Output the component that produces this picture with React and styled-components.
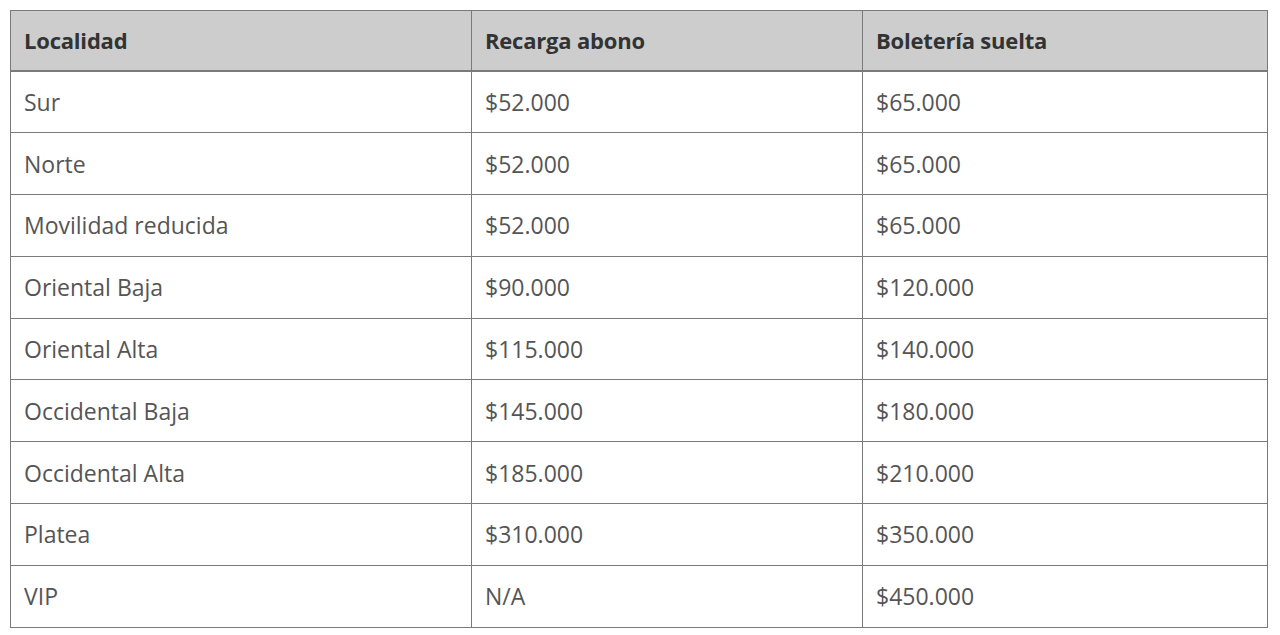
import React from 'react';
import styled, { createGlobalStyle } from 'styled-components';

const rows = [
  ['Sur', '$52.000', '$65.000'],
  ['Norte', '$52.000', '$65.000'],
  ['Movilidad reducida', '$52.000', '$65.000'],
  ['Oriental Baja', '$90.000', '$120.000'],
  ['Oriental Alta', '$115.000', '$140.000'],
  ['Occidental Baja', '$145.000', '$180.000'],
  ['Occidental Alta', '$185.000', '$210.000'],
  ['Platea', '$310.000', '$350.000'],
  ['VIP', 'N/A', '$450.000'],
];

export default function App() {
  return (
    <>
      <GlobalStyle />
      <Wrapper>
        <Table>
          <colgroup>
            <col style={{ width: 461 }} />
            <col style={{ width: 391 }} />
            <col />
          </colgroup>
          <thead>
            <tr>
              <Th>Localidad</Th>
              <Th>Recarga abono</Th>
              <Th>Boletería suelta</Th>
            </tr>
          </thead>
          <tbody>
            {rows.map((r) => (
              <tr key={r[0]}>
                {r.map((c, i) => (
                  <Td key={i}>{c}</Td>
                ))}
              </tr>
            ))}
          </tbody>
        </Table>
      </Wrapper>
    </>
  );
}

const GlobalStyle = createGlobalStyle`
  body {
    margin: 0;
    background: #fff;
    font-family: 'Open Sans', 'Noto Sans', sans-serif;
  }
`;

const Wrapper = styled.div`
  padding: 10px 12px 0 10px;
`;

const Table = styled.table`
  width: 1258px;
  border-collapse: collapse;
  table-layout: fixed;
  border: 1px solid #7a7a7a;
`;

const Th = styled.th`
  height: 60px;
  padding: 0 13px;
  background: #cdcdcd;
  color: #333;
  font-size: 22px;
  font-weight: 700;
  letter-spacing: -0.2px;
  text-align: left;
  border: 1px solid #7a7a7a;
  border-bottom: 2px solid #7a7a7a;
  box-sizing: border-box;
`;

const Td = styled.td`
  height: 60.8px;
  padding: 0 13px;
  color: #555;
  font-size: 23px;
  font-weight: 400;
  border: 1px solid #7a7a7a;
`;
